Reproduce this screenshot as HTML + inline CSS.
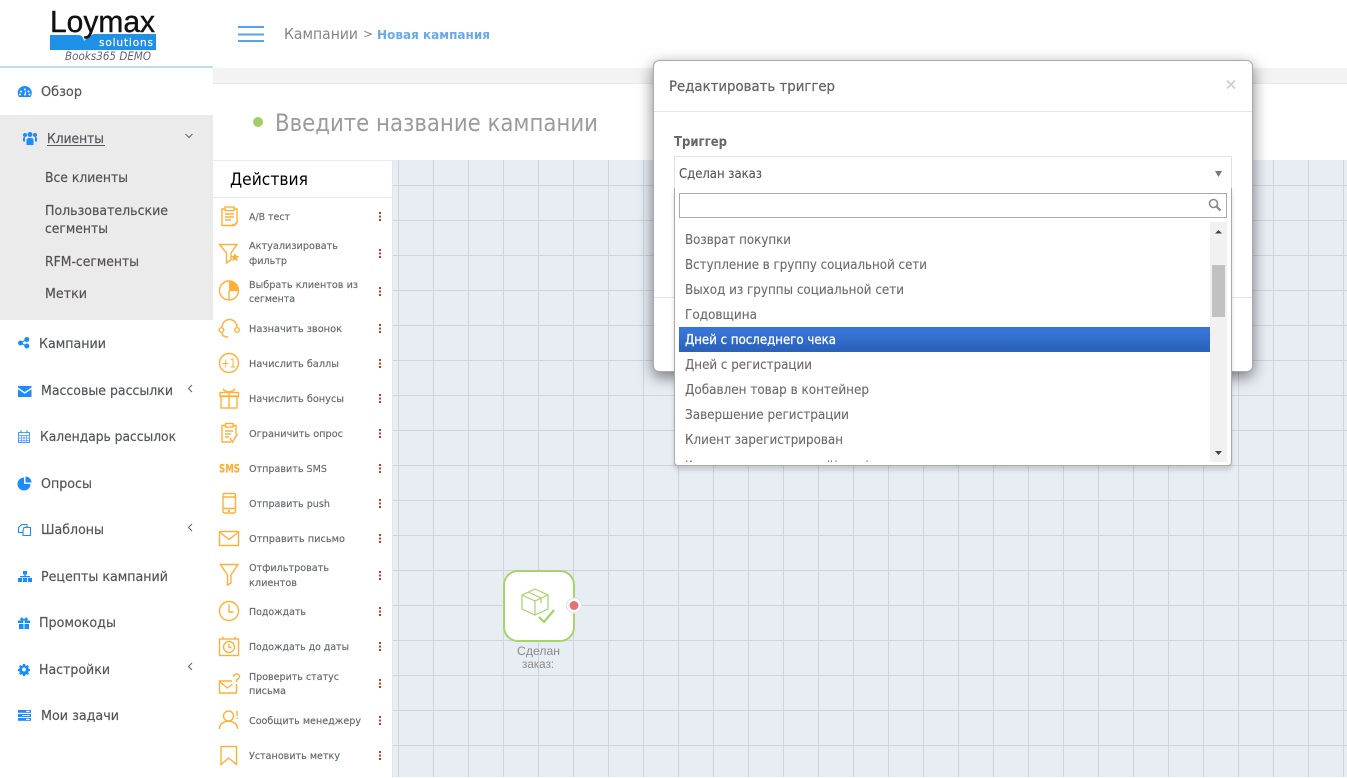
<!DOCTYPE html>
<html lang="ru">
<head>
<meta charset="utf-8">
<title>Новая кампания</title>
<style>
html,body{margin:0;padding:0;width:1347px;height:777px;overflow:hidden;background:#fff}
.a{position:absolute}
svg{position:absolute;left:0;top:0;display:block}
text{font-family:"DejaVu Sans","Liberation Sans",sans-serif}
.s{font-size:13px;fill:#50555b;stroke:#50555b;stroke-width:.18}
.sub{font-size:13px;fill:#55504d;stroke:#55504d;stroke-width:.18}
.t{font-size:10px;fill:#63686e;stroke:#63686e;stroke-width:.15}
.m{font-size:13px;fill:#6a6a6a;stroke:#6a6a6a;stroke-width:.12}
.ic path,.ic rect,.ic circle,.ic line{stroke:#ffb038;stroke-width:1.4;fill:none}
.ic .f{fill:#ffb038;stroke:none}
.b path,.b rect,.b circle{fill:#1a8cff}
.d rect{fill:#c0392b}
</style>
</head>
<body>
<!-- regions -->
<div class="a" style="left:213px;top:68px;width:1134px;height:15px;background:#f3f3f3;border-bottom:1px solid #e8e8e8"></div>
<div class="a" style="left:0;top:66px;width:213px;height:2px;background:#bcdcf8"></div>
<div class="a" style="left:0;top:115px;width:213px;height:205px;background:#ebebeb"></div>
<div class="a" style="left:393px;top:160px;width:954px;height:617px;background-color:#e8edf4;background-image:linear-gradient(#d0d3d8 1px,transparent 1px),linear-gradient(90deg,#d0d3d8 1px,transparent 1px);background-size:35px 35px;background-position:5px 25px"></div>
<div class="a" style="left:213px;top:160px;width:179px;height:617px;background:#fff;border-top:1px solid #e6ecf4;border-right:1px solid #e2e6ec"></div>
<div class="a" style="left:213px;top:197px;width:179px;height:1px;background:#e6ecf4"></div>

<svg width="1347" height="777" viewBox="0 0 1347 777">
  <!-- logo -->
  <path d="M50 35H78Q83 35 84 41Q88 36 94 34H156V50H50Z" fill="#1e90e8"/>
  <text x="50" y="32" textLength="105" lengthAdjust="spacingAndGlyphs" style="font-family:'Liberation Sans',sans-serif;font-size:31px;fill:#111;stroke:#111;stroke-width:.4">Loymax</text>
  <text x="99" y="46" textLength="54" lengthAdjust="spacing" style="font-size:10.5px;fill:#fff;stroke:#fff;stroke-width:.2">solutions</text>
  <text x="65" y="60" textLength="86" lengthAdjust="spacingAndGlyphs" style="font-size:11.5px;font-style:italic;fill:#666">Books365 DEMO</text>

  <!-- hamburger + breadcrumb -->
  <rect x="238" y="26" width="26" height="2" fill="#5aa2e6"/>
  <rect x="238" y="33.500" width="26" height="2" fill="#5aa2e6"/>
  <rect x="238" y="40" width="26" height="2" fill="#5aa2e6"/>
  <text x="284" y="39" textLength="74" lengthAdjust="spacingAndGlyphs" style="font-size:15px;fill:#858585">Кампании</text>
  <text x="363" y="38" style="font-size:12px;fill:#858585">&gt;</text>
  <text x="377" y="39" textLength="113" lengthAdjust="spacingAndGlyphs" style="font-size:12.5px;font-weight:bold;fill:#6aa9ea">Новая кампания</text>

  <!-- title -->
  <circle cx="258" cy="122" r="5" fill="#9fd065"/>
  <text x="275" y="131" textLength="323" lengthAdjust="spacingAndGlyphs" style="font-size:24px;fill:#9b9b9b">Введите название кампании</text>
  <text x="230" y="185" textLength="78" lengthAdjust="spacingAndGlyphs" style="font-size:17px;fill:#000">Действия</text>

  <!-- sidebar text -->
  <text class="s" x="41" y="96" textLength="41" lengthAdjust="spacingAndGlyphs">Обзор</text>
  <text class="s" x="47" y="143" textLength="57" lengthAdjust="spacingAndGlyphs">Клиенты</text>
  <rect x="47" y="145" width="58" height="1" fill="#555a60"/>
  <text class="sub" x="45" y="182" textLength="83" lengthAdjust="spacingAndGlyphs">Все клиенты</text>
  <text class="sub" x="45" y="215" textLength="123" lengthAdjust="spacingAndGlyphs">Пользовательские</text>
  <text class="sub" x="45" y="233" textLength="63" lengthAdjust="spacingAndGlyphs">сегменты</text>
  <text class="sub" x="45" y="266" textLength="94" lengthAdjust="spacingAndGlyphs">RFM-сегменты</text>
  <text class="sub" x="45" y="298" textLength="42" lengthAdjust="spacingAndGlyphs">Метки</text>
  <text class="s" x="39" y="348" textLength="67" lengthAdjust="spacingAndGlyphs">Кампании</text>
  <text class="s" x="41" y="395" textLength="132" lengthAdjust="spacingAndGlyphs">Массовые рассылки</text>
  <text class="s" x="40" y="441" textLength="136" lengthAdjust="spacingAndGlyphs">Календарь рассылок</text>
  <text class="s" x="41" y="488" textLength="51" lengthAdjust="spacingAndGlyphs">Опросы</text>
  <text class="s" x="41" y="534" textLength="63" lengthAdjust="spacingAndGlyphs">Шаблоны</text>
  <text class="s" x="41" y="581" textLength="127" lengthAdjust="spacingAndGlyphs">Рецепты кампаний</text>
  <text class="s" x="39" y="627" textLength="77" lengthAdjust="spacingAndGlyphs">Промокоды</text>
  <text class="s" x="39" y="674" textLength="71" lengthAdjust="spacingAndGlyphs">Настройки</text>
  <text class="s" x="41" y="720" textLength="78" lengthAdjust="spacingAndGlyphs">Мои задачи</text>

  <!-- chevrons -->
  <g fill="none" stroke="#667" stroke-width="1.100">
    <path d="M185.500 134l3.500 3.500 3.500-3.500"/>
    <path d="M192 385l-3.500 3.500 3.500 3.500"/>
    <path d="M192 524l-3.500 3.500 3.500 3.500"/>
    <path d="M192 663l-3.500 3.500 3.500 3.500"/>
  </g>

  <!-- sidebar icons -->
  <g class="b">
    <path fill-rule="evenodd" d="M19 97a7 7 0 1 1 11.500 0zM24.800 88.500a1 1 0 1 0 .01 0zM21 90.500a1 1 0 1 0 .01 0zM28.500 90.500a1 1 0 1 0 .01 0zM20 93.500a1 1 0 1 0 .01 0zM29.500 93.500a1 1 0 1 0 .01 0zM24 95.500h1.600l.6-4-1 0z"/>
    <circle cx="30" cy="134.500" r="2.500"/><circle cx="25" cy="135" r="2"/><circle cx="35" cy="135" r="2"/>
    <path d="M26.500 145v-5q0-2 3.500-2t3.500 2v5z"/><path d="M23 141.500v-3q0-1.500 2-1.500v4.500zM37 141.500v-3q0-1.500-2-1.500v4.500z"/>
    <circle cx="26.800" cy="339.500" r="2.500"/><circle cx="26.800" cy="346" r="2.500"/><circle cx="20.500" cy="343" r="2.500"/>
    <path d="M20 342.500l6.600-3.500 .5 1-6.600 3.500zM20 343.500l.5-1 6.600 3 -.5 1z"/>
    <path d="M18 386h13.500v1.500l-6.750 4.500-6.750-4.500zM18 389.300l6.750 4.500 6.750-4.500V397H18z"/>
  </g>
  <g fill="none" stroke="#4a9dff" stroke-width="1">
    <rect x="18.500" y="432.500" width="11" height="10"/>
    <path d="M18.500 435.500h11M18.500 438h11M18.500 440.500h11M21.500 435v7.500M24 435v7.500M26.500 435v7.500" stroke-width=".7"/>
    <path d="M21 430.500v2.500M27 430.500v2.500" stroke-width="1.400"/>
  </g>
  <g class="b">
    <path d="M24 477.500a6.500 6.500 0 1 0 6.500 6.500H24z"/><path d="M25.500 476.500a6 6 0 0 1 6 6h-6z"/>
  </g>
  <g fill="none" stroke="#1a8cff" stroke-width="1.100">
    <path d="M23 532.500h-4.500V527.500l3.500-3h5v3"/>
    <path d="M24 527.500h6.500v8h-7.500v-5z"/>
  </g>
  <g class="b">
    <rect x="23" y="571" width="4" height="3.500"/><rect x="24.300" y="574" width="1.400" height="2.500"/><rect x="20" y="576" width="10" height="1.300"/>
    <rect x="18" y="578" width="4" height="4"/><rect x="23" y="578" width="4" height="4"/><rect x="28" y="578" width="4" height="4"/>
    <path d="M18 620.500h12v2.500h-5.300v-2.500h-1.400v2.500H18zM19 624h4.500v5H19zM24.500 624h4.500v5h-4.500z"/><path d="M21 617.500q3 0 3 3h-3q-1.500-1.500 0-3zM27 617.500q-3 0-3 3h3q1.500-1.500 0-3z"/>
    <g transform="translate(24 669.500) scale(.8) translate(-24 -670)">
      <path fill-rule="evenodd" d="M22.800 663h2.400l.4 1.800 1.300.6 1.700-1 1.600 1.700-1 1.600.6 1.300 1.700.4v2.400l-1.700.4-.6 1.300 1 1.600-1.600 1.700-1.700-1-1.300.6-.4 1.800h-2.400l-.4-1.800-1.300-.6-1.700 1-1.600-1.700 1-1.600-.6-1.300-1.800-.4v-2.400l1.800-.4.600-1.300-1-1.600 1.600-1.700 1.700 1 1.300-.6zM24 667.500a2.500 2.500 0 1 0 .01 0z"/>
    </g>
    <rect x="18" y="710" width="13" height="2.800"/><rect x="18" y="714" width="13" height="3"/><rect x="18" y="718" width="13" height="2.800"/>
  </g>
  <g fill="#fff"><rect x="26" y="710.800" width="3.500" height="1.200"/><rect x="22" y="715" width="7.500" height="1"/><rect x="26" y="718.800" width="3.500" height="1.200"/></g>

  <!-- action labels -->
  <text class="t" x="249" y="220" textLength="41" lengthAdjust="spacingAndGlyphs">А/В тест</text>
  <text class="t" x="249" y="249" textLength="89" lengthAdjust="spacingAndGlyphs">Актуализировать</text>
  <text class="t" x="249" y="264" textLength="38" lengthAdjust="spacingAndGlyphs">фильтр</text>
  <text class="t" x="249" y="288" textLength="109" lengthAdjust="spacingAndGlyphs">Выбрать клиентов из</text>
  <text class="t" x="249" y="302" textLength="46" lengthAdjust="spacingAndGlyphs">сегмента</text>
  <text class="t" x="249" y="332" textLength="93" lengthAdjust="spacingAndGlyphs">Назначить звонок</text>
  <text class="t" x="249" y="367" textLength="90" lengthAdjust="spacingAndGlyphs">Начислить баллы</text>
  <text class="t" x="249" y="402" textLength="95" lengthAdjust="spacingAndGlyphs">Начислить бонусы</text>
  <text class="t" x="249" y="437" textLength="94" lengthAdjust="spacingAndGlyphs">Ограничить опрос</text>
  <text class="t" x="249" y="472" textLength="78" lengthAdjust="spacingAndGlyphs">Отправить SMS</text>
  <text class="t" x="249" y="507" textLength="81" lengthAdjust="spacingAndGlyphs">Отправить push</text>
  <text class="t" x="249" y="542" textLength="96" lengthAdjust="spacingAndGlyphs">Отправить письмо</text>
  <text class="t" x="249" y="571" textLength="80" lengthAdjust="spacingAndGlyphs">Отфильтровать</text>
  <text class="t" x="249" y="586" textLength="48" lengthAdjust="spacingAndGlyphs">клиентов</text>
  <text class="t" x="249" y="615" textLength="57" lengthAdjust="spacingAndGlyphs">Подождать</text>
  <text class="t" x="249" y="650" textLength="100" lengthAdjust="spacingAndGlyphs">Подождать до даты</text>
  <text class="t" x="249" y="680" textLength="90" lengthAdjust="spacingAndGlyphs">Проверить статус</text>
  <text class="t" x="249" y="694" textLength="37" lengthAdjust="spacingAndGlyphs">письма</text>
  <text class="t" x="249" y="724" textLength="112" lengthAdjust="spacingAndGlyphs">Сообщить менеджеру</text>
  <text class="t" x="249" y="759" textLength="91" lengthAdjust="spacingAndGlyphs">Установить метку</text>

  <!-- red kebab dots -->
  <g class="d">
    <rect x="379" y="212" width="2" height="2"/><rect x="379" y="215.500" width="2" height="2"/><rect x="379" y="219" width="2" height="2"/>
    <rect x="379" y="249" width="2" height="2"/><rect x="379" y="252.500" width="2" height="2"/><rect x="379" y="256" width="2" height="2"/>
    <rect x="379" y="287" width="2" height="2"/><rect x="379" y="290.500" width="2" height="2"/><rect x="379" y="294" width="2" height="2"/>
    <rect x="379" y="324" width="2" height="2"/><rect x="379" y="327.500" width="2" height="2"/><rect x="379" y="331" width="2" height="2"/>
    <rect x="379" y="359" width="2" height="2"/><rect x="379" y="362.500" width="2" height="2"/><rect x="379" y="366" width="2" height="2"/>
    <rect x="379" y="394" width="2" height="2"/><rect x="379" y="397.500" width="2" height="2"/><rect x="379" y="401" width="2" height="2"/>
    <rect x="379" y="429" width="2" height="2"/><rect x="379" y="432.500" width="2" height="2"/><rect x="379" y="436" width="2" height="2"/>
    <rect x="379" y="464" width="2" height="2"/><rect x="379" y="467.500" width="2" height="2"/><rect x="379" y="471" width="2" height="2"/>
    <rect x="379" y="499" width="2" height="2"/><rect x="379" y="502.500" width="2" height="2"/><rect x="379" y="506" width="2" height="2"/>
    <rect x="379" y="534" width="2" height="2"/><rect x="379" y="537.500" width="2" height="2"/><rect x="379" y="541" width="2" height="2"/>
    <rect x="379" y="571" width="2" height="2"/><rect x="379" y="574.500" width="2" height="2"/><rect x="379" y="578" width="2" height="2"/>
    <rect x="379" y="607" width="2" height="2"/><rect x="379" y="610.500" width="2" height="2"/><rect x="379" y="614" width="2" height="2"/>
    <rect x="379" y="642" width="2" height="2"/><rect x="379" y="645.500" width="2" height="2"/><rect x="379" y="649" width="2" height="2"/>
    <rect x="379" y="679" width="2" height="2"/><rect x="379" y="682.500" width="2" height="2"/><rect x="379" y="686" width="2" height="2"/>
    <rect x="379" y="716" width="2" height="2"/><rect x="379" y="719.500" width="2" height="2"/><rect x="379" y="723" width="2" height="2"/>
    <rect x="379" y="751" width="2" height="2"/><rect x="379" y="754.500" width="2" height="2"/><rect x="379" y="758" width="2" height="2"/>
  </g>

  <!-- action icons -->
  <g class="ic">
    <path d="M225 209h-3v16.500h12.500l2.500-3V209h-3"/><rect x="225" y="207" width="9" height="3.500"/>
    <path d="M225 214h9M225 217h9M225 220h6M232 224l2 1.500 3.500-4"/>

    <path d="M219.500 244.500H237L231 253v7l-4.500 3v-10z"/>
    <path class="f" d="M235 253l1.300 2.800 3 .3-2.200 2 .6 3-2.700-1.500-2.700 1.500.6-3-2.200-2 3-.3z"/>

    <circle cx="229" cy="290.500" r="9.500"/>
    <path class="f" d="M229 281a9.500 9.500 0 0 1 9.500 9.500H229z"/>
    <path d="M229 290.500v9.500M229 290.500h9.500"/>

    <path d="M222 327a7.500 7.500 0 0 1 15 0"/>
    <circle cx="221.500" cy="330" r="2.300"/><circle cx="237" cy="330" r="2.300"/>
    <path d="M222 333q0 4 6 4"/>

    <circle cx="229" cy="363" r="9.500"/>

    <rect x="221" y="396" width="16" height="12"/><rect x="220" y="392.500" width="18.500" height="4"/>
    <path d="M229 392.500V408M229 392q-6-1-5.500-3.500M229 392q6-1 5.500-3.500"/>

    <path d="M226 425.500h-4v16.500h9M233 425.500h3v9"/><rect x="225.500" y="423.500" width="7.500" height="3.500"/>
    <path d="M225 431h8M225 434h6M225 437h4M230 438l2.500 4 5-8"/>

    <rect x="223" y="493.500" width="12.500" height="19.500" rx="1.500"/>
    <path d="M223 497h12.500M223 508.500h12.500"/><circle cx="229" cy="511" r=".5"/>

    <rect x="219.500" y="531.500" width="19" height="14" />
    <path d="M219.500 532l9.500 7.500 9.500-7.500"/>

    <path d="M220.500 564.500H238L231 575v8l-3.500 2v-10z"/>

    <circle cx="229" cy="611" r="9.500"/>
    <path d="M229 604.500V612h4.500"/>

    <rect x="219.500" y="639" width="19" height="16.500"/>
    <path d="M223 636.500v3M235 636.500v3"/>
    <circle cx="229" cy="647" r="5.500"/><path d="M229 644v3.500h2.500"/>

    <path d="M232 681h-12.500v12h17v-8M220 682l7.500 6 5-4"/>
    <path d="M233.500 677q.5-3 3-3t3 2.500q0 2-3 3.500v2M236.500 684v1.500"/>

    <circle cx="228.500" cy="716" r="5"/>
    <path d="M219.500 729q0-7 9-8 9 1 9 8"/><path d="M237 711v5M237 717.500v1.500"/>

    <path d="M221 746.500H236.500V764.500L228.750 758 221 764.500z"/>
  </g>
  <text x="221.500" y="367.500" textLength="14.500" lengthAdjust="spacingAndGlyphs" style="font-size:12px;fill:#ffb038">+1</text>
  <text x="219" y="472.500" textLength="21" lengthAdjust="spacingAndGlyphs" style="font-size:11.500px;font-weight:bold;fill:#ffb038;stroke:#ffb038;stroke-width:.2">SMS</text>

  <!-- flow node -->
  <rect x="504" y="571" width="70" height="70" rx="14" fill="#fff" stroke="#a5d46a" stroke-width="2"/>
  <g fill="none" stroke="#a5d46a" stroke-width="1.200">
    <path d="M522 595l13-6 13 6v14l-13 6-13-6z"/>
    <path d="M522 595l13 6 13-6M535 601v14M528 592l13 6v5"/>
  </g>
  <path d="M539 617l5 5 10-12" fill="none" stroke="#a5d46a" stroke-width="2.200"/>
  <circle cx="574" cy="605.500" r="7.500" fill="#fff" stroke="#dfe2e6"/>
  <circle cx="574" cy="605.500" r="4.500" fill="#e57373"/>
  <text x="517" y="655" textLength="43" lengthAdjust="spacingAndGlyphs" style="font-family:'Liberation Sans',sans-serif;font-size:12px;fill:#8a8a8a">Сделан</text>
  <text x="522" y="668" textLength="32" lengthAdjust="spacingAndGlyphs" style="font-family:'Liberation Sans',sans-serif;font-size:12px;fill:#8a8a8a">заказ:</text>
</svg>

<!-- modal -->
<div class="a" style="left:653px;top:60px;width:598px;height:310px;background:#fff;border:1px solid #aaa;border-radius:6px;box-shadow:0 5px 15px rgba(0,0,0,.5)"></div>
<div class="a" style="left:654px;top:111px;width:598px;height:1px;background:#e5e5e5"></div>
<div class="a" style="left:654px;top:297px;width:598px;height:1px;background:#e5e5e5"></div>
<div class="a" style="left:674px;top:156px;width:556px;height:40px;border:1px solid #e2e2e2;background:#fff"></div>
<div class="a" style="left:674px;top:188px;width:556px;height:277px;background:#fff;border:1px solid #aaa;border-top:0;border-radius:0 0 4px 4px;box-shadow:0 4px 5px rgba(0,0,0,.15)"></div>
<div class="a" style="left:679px;top:193px;width:546px;height:23px;border:1px solid #aaa;background:#fff"></div>
<div class="a" style="left:679px;top:327px;width:531px;height:25px;background:linear-gradient(#3875d7 20%,#2a62bc 90%)"></div>
<div class="a" style="left:1210px;top:222px;width:17px;height:240px;background:#f1f1f1"></div>
<div class="a" style="left:1212px;top:265px;width:13px;height:52px;background:#c1c1c1"></div>

<svg width="1347" height="777" viewBox="0 0 1347 777">
  <text x="669" y="91" textLength="166" lengthAdjust="spacingAndGlyphs" style="font-size:14px;fill:#666;stroke:#666;stroke-width:.25">Редактировать триггер</text>
  <path d="M1227 80.500l8 8M1235 80.500l-8 8" stroke="#cfcfcf" stroke-width="1.800" fill="none"/>
  <text x="674" y="146" textLength="53" lengthAdjust="spacingAndGlyphs" style="font-size:13px;font-weight:bold;fill:#666">Триггер</text>
  <text x="679" y="178" textLength="83" lengthAdjust="spacingAndGlyphs" style="font-size:13px;fill:#555;stroke:#555;stroke-width:.12">Сделан заказ</text>
  <path d="M1215 171h7l-3.500 6z" fill="#777"/>
  <circle cx="1213.500" cy="203.500" r="4" fill="none" stroke="#888" stroke-width="1.600"/>
  <path d="M1216.500 206.500l4 4" stroke="#888" stroke-width="2.200"/>
  <path d="M1215 233.500l3.500-3.500 3.500 3.500z" fill="#444"/>
  <path d="M1215 451h7l-3.500 4z" fill="#444"/>
  <text class="m" x="685" y="244" textLength="106" lengthAdjust="spacingAndGlyphs">Возврат покупки</text>
  <text class="m" x="685" y="269" textLength="242" lengthAdjust="spacingAndGlyphs">Вступление в группу социальной сети</text>
  <text class="m" x="685" y="294" textLength="219" lengthAdjust="spacingAndGlyphs">Выход из группы социальной сети</text>
  <text class="m" x="685" y="319" textLength="72" lengthAdjust="spacingAndGlyphs">Годовщина</text>
  <text x="685" y="344" textLength="151" lengthAdjust="spacingAndGlyphs" style="font-size:13px;fill:#fff;stroke:#fff;stroke-width:.3">Дней с последнего чека</text>
  <text class="m" x="685" y="369" textLength="127" lengthAdjust="spacingAndGlyphs">Дней с регистрации</text>
  <text class="m" x="685" y="394" textLength="184" lengthAdjust="spacingAndGlyphs">Добавлен товар в контейнер</text>
  <text class="m" x="685" y="419" textLength="164" lengthAdjust="spacingAndGlyphs">Завершение регистрации</text>
  <text class="m" x="685" y="444" textLength="158" lengthAdjust="spacingAndGlyphs">Клиент зарегистрирован</text>
  <svg x="679" y="450" width="531" height="12" viewBox="0 0 531 12">
    <text class="m" x="6" y="20.500" textLength="200" lengthAdjust="spacingAndGlyphs">Клиент подтвердил e-mail/телефон</text>
  </svg>
</svg>
</body>
</html>
